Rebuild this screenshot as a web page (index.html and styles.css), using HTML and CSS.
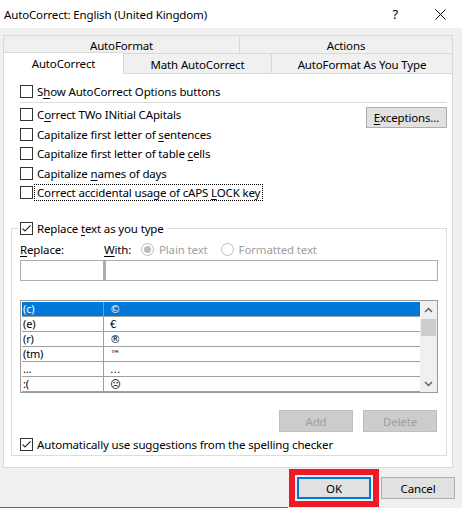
FILE: index.html
```html
<!DOCTYPE html>
<html lang="en">
<head>
    <meta charset="UTF-8">
    <title>AutoCorrect: English (United Kingdom)</title>
    <link rel="stylesheet" href="styles.css">
</head>
<body>
    <div class="titlebar">
        <span class="title">AutoCorrect: English (United Kingdom)</span>
        <span class="help">?</span>
        <svg class="close" width="11" height="11" viewBox="0 0 11 11">
            <path d="M0.5 0.5 L10.5 10.5 M10.5 0.5 L0.5 10.5" stroke="#000" stroke-width="1" fill="none"/>
        </svg>
    </div>

    <div class="dialog">
        <div class="tab-row back">
            <div class="tab t-autoformat">AutoFormat</div>
            <div class="tab t-actions">Actions</div>
        </div>
        <div class="tab-row front">
            <div class="tab t-autocorrect active">AutoCorrect</div>
            <div class="tab t-math">Math AutoCorrect</div>
            <div class="tab t-asyoutype">AutoFormat As You Type</div>
        </div>

        <div class="panel">
            <div class="options">
                <div class="check-row show-row">
                    <span class="cb"></span>
                    <span>S<u>h</u>ow AutoCorrect Options buttons</span>
                </div>
                <div class="separator"></div>
                <div class="option-block">
                    <div class="option-list">
                        <div class="check-row">
                            <span class="cb"></span>
                            <span>C<u>o</u>rrect TWo INitial CApitals</span>
                        </div>
                        <div class="check-row">
                            <span class="cb"></span>
                            <span>Capitalize first letter of <u>s</u>entences</span>
                        </div>
                        <div class="check-row">
                            <span class="cb"></span>
                            <span>Capitalize first letter of table <u>c</u>ells</span>
                        </div>
                        <div class="check-row">
                            <span class="cb"></span>
                            <span>Capitalize <u>n</u>ames of days</span>
                        </div>
                        <div class="check-row">
                            <span class="cb"></span>
                            <span class="focus">Correct accidental usage of cAPS <u>L</u>OCK key</span>
                        </div>
                    </div>
                    <button class="btn exceptions"><u>E</u>xceptions...</button>
                </div>
            </div>

            <fieldset class="replace-group">
                <legend class="check-row">
                    <span class="cb checked">
                        <svg width="11" height="11" viewBox="0 0 11 11"><path d="M1.5 5.5 L4 8 L9.5 2.5" stroke="#333" stroke-width="1.1" fill="none"/></svg>
                    </span>
                    <span>Replace <u>t</u>ext as you type</span>
                </legend>

                <div class="labels">
                    <span class="lbl-replace"><u>R</u>eplace:</span>
                    <span class="lbl-with"><u>W</u>ith:</span>
                    <span class="radio on"><span class="dot"></span></span>
                    <span class="radio-text">Plain text</span>
                    <span class="radio"></span>
                    <span class="radio-text">Formatted text</span>
                </div>

                <div class="inputs">
                    <div class="input in-replace"></div>
                    <div class="input in-with"></div>
                </div>

                <div class="entries">
                    <div class="rows">
                        <div class="row selected"><span class="k">(c)</span><span class="v">©</span></div>
                        <div class="row"><span class="k">(e)</span><span class="v">€</span></div>
                        <div class="row"><span class="k">(r)</span><span class="v">®</span></div>
                        <div class="row"><span class="k">(tm)</span><span class="v">™</span></div>
                        <div class="row"><span class="k">...</span><span class="v">…</span></div>
                        <div class="row"><span class="k">:(</span><span class="v">☹</span></div>
                    </div>
                    <div class="scrollbar">
                        <div class="sb-btn">
                            <svg width="9" height="6" viewBox="0 0 9 6"><path d="M1 5 L4.5 1.5 L8 5" stroke="#606060" stroke-width="1.5" fill="none"/></svg>
                        </div>
                        <div class="sb-track"><div class="thumb"></div></div>
                        <div class="sb-btn">
                            <svg width="9" height="6" viewBox="0 0 9 6"><path d="M1 1 L4.5 4.5 L8 1" stroke="#606060" stroke-width="1.5" fill="none"/></svg>
                        </div>
                    </div>
                </div>

                <div class="list-buttons">
                    <button class="btn disabled">Add</button>
                    <button class="btn disabled">Delete</button>
                </div>

                <div class="check-row auto-row">
                    <span class="cb checked">
                        <svg width="11" height="11" viewBox="0 0 11 11"><path d="M1.5 5.5 L4 8 L9.5 2.5" stroke="#333" stroke-width="1.1" fill="none"/></svg>
                    </span>
                    <span>Automatically use su<u>g</u>gestions from the spelling checker</span>
                </div>
            </fieldset>
        </div>
    </div>

    <div class="footer">
        <button class="btn ok">OK</button>
        <button class="btn">Cancel</button>
    </div>
    <div class="edge"></div>
</body>
</html>
```

FILE: styles.css
```css
body {
    margin: 0;
    width: 462px;
    height: 508px;
    overflow: hidden;
    background: #f0f0f0;
    font-family: "Segoe UI", "Noto Sans", "DejaVu Sans", sans-serif;
    font-size: 11.5px;
    letter-spacing: -0.15px;
    color: #000;
}
u {
    text-decoration-thickness: 1px;
    text-underline-offset: 2px;
}

/* window title */
.titlebar {
    height: 28px;
    background: #fff;
    display: flex;
    align-items: center;
    padding-left: 4px;
}
.title { flex: 1; }
.help {
    font-size: 13px;
    margin-right: 37px;
}
.close { margin-right: 16px; }

/* tabs */
.dialog {
    padding: 7px 9px 0 3px;
}
.tab-row {
    display: flex;
    align-items: flex-start;
}
.tab-row.back { height: 18px; }
.tab-row.front { height: 20px; }
.tab {
    box-sizing: border-box;
    border: 1px solid #d9d9d9;
    border-bottom: none;
    background: #f0f0f0;
    text-align: center;
}
.tab + .tab { margin-left: -1px; }
.back .tab { height: 18px; line-height: 18px; padding-top: 1px; }
.front .tab { height: 20px; line-height: 19px; padding-top: 1px; }
.t-autoformat { width: 237px; }
.t-actions { width: 214px; }
.t-autocorrect { width: 121px; }
.t-math { width: 149px; }
.t-asyoutype { width: 182px; }
.front .tab.active {
    height: 22px;
    margin-top: -1px;
    background: #fff;
    position: relative;
    z-index: 1;
}

.panel {
    box-sizing: border-box;
    height: 395px;
    border: 1px solid #d9d9d9;
    background: #fff;
    padding: 7px 5px 10px 7px;
}

/* checkbox rows */
.check-row {
    display: flex;
    align-items: center;
    height: 19.5px;
    white-space: nowrap;
}
.cb {
    box-sizing: border-box;
    width: 13px;
    height: 13px;
    border: 1px solid #333;
    background: #fff;
    margin-right: 4px;
    flex: none;
    display: flex;
}
.options { padding-left: 9px; }
.show-row { height: 20px; }
.separator {
    height: 1px;
    background: #dcdcdc;
    margin-top: 1px;
}
.option-block {
    display: flex;
    justify-content: space-between;
    margin-top: 2px;
}
.focus {
    margin-left: -2px;
    padding: 0 2px;
    line-height: 15px;
    outline: 1px dotted #000;
}

/* buttons */
.btn {
    box-sizing: border-box;
    width: 74px;
    height: 22px;
    padding: 0;
    border: 1px solid #adadad;
    background: #e1e1e1;
    font: inherit;
    letter-spacing: inherit;
    color: #000;
}
.exceptions {
    width: 81px;
    height: 21px;
    margin-top: 2px;
}
.btn.disabled {
    background: #cccccc;
    border-color: #bfbfbf;
    color: #a0a0a0;
}

/* replace group */
.replace-group {
    margin: 17.5px 0 0 0;
    padding: 0 8px 3px 8px;
    border: 1px solid #dcdcdc;
    min-width: 0;
}
.replace-group legend {
    height: 16px;
    padding: 0 2px;
    margin-left: -2px;
}
.labels {
    display: flex;
    align-items: center;
    height: 16px;
    margin-top: 5px;
}
.lbl-replace { width: 84px; }
.lbl-with { width: 37px; }
.radio {
    box-sizing: border-box;
    width: 13px;
    height: 13px;
    border: 1px solid #bcbcbc;
    border-radius: 50%;
    display: flex;
    align-items: center;
    justify-content: center;
    flex: none;
}
.radio .dot {
    width: 7px;
    height: 7px;
    border-radius: 50%;
    background: #bcbcbc;
}
.radio-text {
    color: #a0a0a0;
    margin-left: 5px;
    margin-right: 13px;
}
.inputs {
    display: flex;
    height: 21px;
    margin-top: 3px;
}
.input {
    box-sizing: border-box;
    height: 21px;
    border: 1px solid #adadad;
}
.in-replace { width: 84px; }
.in-with { flex: 1; border-left-width: 2px; }

/* replacement list */
.entries {
    box-sizing: border-box;
    display: flex;
    height: 93px;
    margin-top: 19px;
    border: 1px solid #9b9b9b;
}
.rows {
    flex: 1;
    padding: 1px 0 0 1px;
}
.row {
    box-sizing: border-box;
    display: flex;
    height: 15px;
    line-height: 14px;
    border-bottom: 1px solid #a0a0a0;
    font-size: 11px;
}
.row .k {
    box-sizing: border-box;
    width: 82px;
    padding-left: 1px;
    border-right: 1px solid #a0a0a0;
}
.row .v {
    padding-left: 6px;
    font-family: "DejaVu Sans", sans-serif;
    font-size: 10.5px;
}
.row.selected {
    background: #0078d7;
    color: #fff;
}
.row.selected .k { border-right-color: #5aa3e3; }
.scrollbar {
    width: 17px;
    background: #f0f0f0;
    display: flex;
    flex-direction: column;
}
.sb-btn {
    height: 17px;
    display: flex;
    align-items: center;
    justify-content: center;
}
.sb-track { flex: 1; }
.thumb {
    height: 17px;
    margin: 1px 1px 0 1px;
    background: #cdcdcd;
}
.list-buttons {
    display: flex;
    justify-content: flex-end;
    gap: 10px;
    margin-top: 17px;
    margin-right: 1px;
}
.auto-row {
    height: 16px;
    margin-top: 4px;
}

/* dialog buttons */
.footer {
    height: 30px;
    padding: 9px 7px 0 0;
    display: flex;
    justify-content: flex-end;
    align-items: flex-start;
    gap: 10px;
}
.btn.ok {
    border: 2px solid #0078d7;
    outline: 6px solid #ed1c24;
    outline-offset: 2px;
}
.edge {
    width: 288px;
    height: 1px;
    background: #6a6a6a;
}
```
